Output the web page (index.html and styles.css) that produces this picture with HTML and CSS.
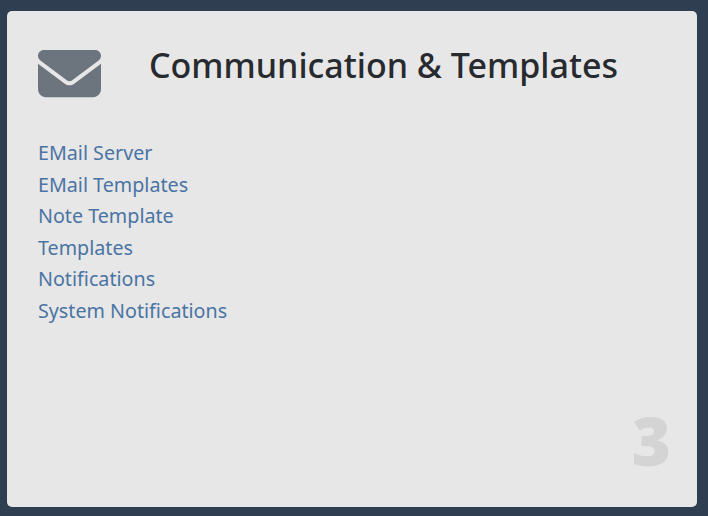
FILE: index.html
```html
<!DOCTYPE html>
<html lang="en">

<head>
  <meta charset="UTF-8" />
  <meta name="viewport" content="width=device-width, initial-scale=1.0" />
  <title>Communication &amp; Templates</title>
  <link rel="stylesheet" href="styles.css">
</head>

<body>
  <div class="card">
    <div class="card-head">
      <svg class="card-icon" viewBox="0 0 512 512" aria-hidden="true">
        <path d="M48 64C21.5 64 0 85.5 0 112c0 15.1 7.1 29.3 19.2 38.4L236.8 313.6c11.4 8.5 27 8.5 38.4 0L492.8 150.4c12.1-9.1 19.2-23.3 19.2-38.4c0-26.5-21.5-48-48-48H48zM0 176V384c0 35.3 28.7 64 64 64H448c35.3 0 64-28.7 64-64V176L294.4 339.2c-22.8 17.1-54 17.1-76.8 0L0 176z" />
      </svg>
      <h2>Communication &amp; Templates</h2>
    </div>

    <ul class="link-list">
      <li><a href="#">EMail Server</a></li>
      <li><a href="#">EMail Templates</a></li>
      <li><a href="#">Note Template</a></li>
      <li><a href="#">Templates</a></li>
      <li><a href="#">Notifications</a></li>
      <li><a href="#">System Notifications</a></li>
    </ul>

    <div class="card-number">3</div>
  </div>
</body>

</html>
```

FILE: styles.css
```css
* {
  box-sizing: border-box;
  font-family: 'Noto Sans', 'Open Sans', sans-serif;
}

html,
body {
  height: 100%;
}

body {
  margin: 0;
  padding: 11px 11px 9px 7px;
  background: #2f3e50;
  overflow: hidden;
}

.card {
  position: relative;
  height: 100%;
  background: #e7e7e7;
  border-radius: 5px;
  padding: 31px 31px;
}

.card-head {
  display: flex;
  align-items: flex-start;
  gap: 47px;
  margin-bottom: 32px;
}

.card-icon {
  width: 63px;
  height: 63px;
  fill: #6c757d;
  flex-shrink: 0;
}

h2 {
  margin: -2px 0 0 1px;
  font-size: 34px;
  line-height: 50px;
  font-weight: 500;
  color: #272a2e;
}

.link-list {
  list-style: none;
  margin: 0;
  padding: 0;
  font-size: 19.7px;
  line-height: 31.5px;
}

.link-list a {
  color: #4a74a3;
  text-decoration: none;
}

.card-number {
  position: absolute;
  right: 26px;
  bottom: 33px;
  font-size: 67px;
  line-height: 1;
  font-weight: 900;
  color: #d4d4d4;
}
```
